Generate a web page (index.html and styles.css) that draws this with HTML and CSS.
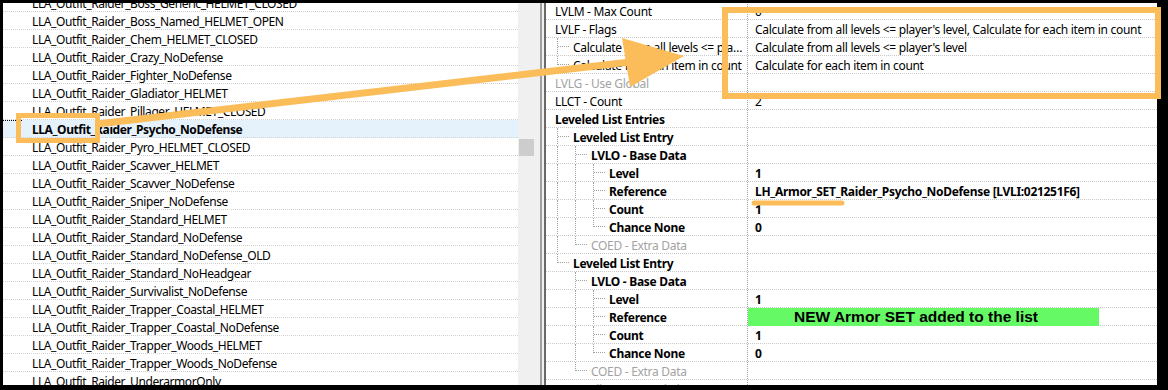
FILE: index.html
```html
<!DOCTYPE html>
<html lang="en">
<head>
    <meta charset="UTF-8">
    <title>Leveled List - Raider Outfits</title>
    <link rel="stylesheet" href="styles.css">
</head>
<body>
    <div class="window">
        <!-- record list (left) -->
        <div class="list-pane">
            <div class="list">
                <div class="item">LLA_Outfit_Raider_Boss_Generic_HELMET_CLOSED</div>
                <div class="item">LLA_Outfit_Raider_Boss_Named_HELMET_OPEN</div>
                <div class="item">LLA_Outfit_Raider_Chem_HELMET_CLOSED</div>
                <div class="item">LLA_Outfit_Raider_Crazy_NoDefense</div>
                <div class="item">LLA_Outfit_Raider_Fighter_NoDefense</div>
                <div class="item">LLA_Outfit_Raider_Gladiator_HELMET</div>
                <div class="item">LLA_Outfit_Raider_Pillager_HELMET_CLOSED</div>
                <div class="item current">LLA_Outfit_Raider_Psycho_NoDefense</div>
                <div class="item">LLA_Outfit_Raider_Pyro_HELMET_CLOSED</div>
                <div class="item">LLA_Outfit_Raider_Scavver_HELMET</div>
                <div class="item">LLA_Outfit_Raider_Scavver_NoDefense</div>
                <div class="item">LLA_Outfit_Raider_Sniper_NoDefense</div>
                <div class="item">LLA_Outfit_Raider_Standard_HELMET</div>
                <div class="item">LLA_Outfit_Raider_Standard_NoDefense</div>
                <div class="item">LLA_Outfit_Raider_Standard_NoDefense_OLD</div>
                <div class="item">LLA_Outfit_Raider_Standard_NoHeadgear</div>
                <div class="item">LLA_Outfit_Raider_Survivalist_NoDefense</div>
                <div class="item">LLA_Outfit_Raider_Trapper_Coastal_HELMET</div>
                <div class="item">LLA_Outfit_Raider_Trapper_Coastal_NoDefense</div>
                <div class="item">LLA_Outfit_Raider_Trapper_Woods_HELMET</div>
                <div class="item">LLA_Outfit_Raider_Trapper_Woods_NoDefense</div>
                <div class="item">LLA_Outfit_Raider_UnderarmorOnly</div>
            </div>
        </div>
        <div class="scrollbar"><div class="thumb"></div></div>
        <div class="splitter"></div>

        <!-- record view (right) -->
        <div class="record-pane">
            <div class="records">
                <div class="rec"><div class="name"><span class="label">LVLM - Max Count</span></div><div class="value">0</div></div>
                <div class="rec"><div class="name"><span class="label">LVLF - Flags</span></div><div class="value">Calculate from all levels &lt;= player's level, Calculate for each item in count</div></div>
                <div class="rec"><div class="name"><span class="g tee"></span><span class="label">Calculate from all levels &lt;= player's level</span></div><div class="value">Calculate from all levels &lt;= player's level</div></div>
                <div class="rec"><div class="name"><span class="g elbow"></span><span class="label">Calculate for each item in count</span></div><div class="value">Calculate for each item in count</div></div>
                <div class="rec unused"><div class="name"><span class="label">LVLG - Use Global</span></div><div class="value"></div></div>
                <div class="rec"><div class="name"><span class="label">LLCT - Count</span></div><div class="value">2</div></div>
                <div class="rec bold"><div class="name"><span class="label">Leveled List Entries</span></div><div class="value"></div></div>

                <div class="rec bold"><div class="name"><span class="g tee"></span><span class="label">Leveled List Entry</span></div><div class="value"></div></div>
                <div class="rec bold"><div class="name"><span class="g pipe"></span><span class="g tee"></span><span class="label">LVLO - Base Data</span></div><div class="value"></div></div>
                <div class="rec bold"><div class="name"><span class="g pipe"></span><span class="g pipe"></span><span class="g tee"></span><span class="label">Level</span></div><div class="value">1</div></div>
                <div class="rec bold"><div class="name"><span class="g pipe"></span><span class="g pipe"></span><span class="g tee"></span><span class="label">Reference</span></div><div class="value">LH_Armor_SET_Raider_Psycho_NoDefense [LVLI:021251F6]</div></div>
                <div class="rec bold"><div class="name"><span class="g pipe"></span><span class="g pipe"></span><span class="g tee"></span><span class="label">Count</span></div><div class="value">1</div></div>
                <div class="rec bold"><div class="name"><span class="g pipe"></span><span class="g pipe"></span><span class="g elbow"></span><span class="label">Chance None</span></div><div class="value">0</div></div>
                <div class="rec unused"><div class="name"><span class="g pipe"></span><span class="g elbow"></span><span class="label">COED - Extra Data</span></div><div class="value"></div></div>

                <div class="rec bold"><div class="name"><span class="g elbow"></span><span class="label">Leveled List Entry</span></div><div class="value"></div></div>
                <div class="rec bold"><div class="name"><span class="g"></span><span class="g tee"></span><span class="label">LVLO - Base Data</span></div><div class="value"></div></div>
                <div class="rec bold"><div class="name"><span class="g"></span><span class="g pipe"></span><span class="g tee"></span><span class="label">Level</span></div><div class="value">1</div></div>
                <div class="rec bold"><div class="name"><span class="g"></span><span class="g pipe"></span><span class="g tee"></span><span class="label">Reference</span></div><div class="value"><span class="note">NEW Armor SET added to the list</span></div></div>
                <div class="rec bold"><div class="name"><span class="g"></span><span class="g pipe"></span><span class="g tee"></span><span class="label">Count</span></div><div class="value">1</div></div>
                <div class="rec bold"><div class="name"><span class="g"></span><span class="g pipe"></span><span class="g elbow"></span><span class="label">Chance None</span></div><div class="value">0</div></div>
                <div class="rec unused"><div class="name"><span class="g"></span><span class="g elbow"></span><span class="label">COED - Extra Data</span></div><div class="value"></div></div>

                <div class="rec unused"><div class="name"><span class="label">LLKC - Filter Keyword Chances</span></div><div class="value"></div></div>
            </div>
        </div>
    </div>

    <!-- annotations drawn over the screenshot -->
    <svg class="marks" width="1168" height="390" viewBox="0 0 1168 390">
        <rect x="18.5" y="115.5" width="79" height="25" fill="none" stroke="#fbbd59" stroke-width="5"/>
        <rect x="725" y="10" width="433" height="86" fill="none" stroke="#fbbd59" stroke-width="6"/>
        <line x1="97" y1="124" x2="630" y2="62" stroke="#fbbd59" stroke-width="7"/>
        <polygon points="622,38 630,87 684,56" fill="#fbbd59"/>
        <line x1="754" y1="203" x2="842" y2="203" stroke="#fbbd59" stroke-width="5" stroke-linecap="round"/>
    </svg>
</body>
</html>
```

FILE: styles.css
```css
body {
    margin: 0;
    height: 390px;
    overflow: hidden;
    background: #000; /* black frame round the capture */
    font-family: "Noto Sans", "Open Sans", sans-serif;
    font-size: 12px;
    letter-spacing: -0.4px;
    color: #000;
    position: relative;
}

.window {
    display: flex;
    height: 382px;
    margin: 3px 11px 0 3px;
    background: #fff;
    overflow: hidden;
}

/* left list */
.list-pane {
    width: 515px;
    flex: none;
    overflow: hidden;
}

.list {
    margin-top: -9px; /* scrolled a bit */
}

.item {
    height: 17px;
    line-height: 19px;
    padding-left: 29px;
    border-bottom: 1px dotted #d2d2d2;
    white-space: nowrap;
    overflow: hidden;
}

.item.current {
    font-weight: bold;
    background-color: #e5f1fb;
    background-image: repeating-linear-gradient(90deg, #000 0 1px, transparent 1px 2px);
    background-size: 20px 1px;
    background-repeat: no-repeat;
}

.scrollbar {
    width: 18px;
    flex: none;
    background: #f0f0f0;
}

.thumb {
    height: 17px;
    margin: 136px 2px 0 1px;
    background: #cdcdcd;
}

.splitter {
    width: 10px;
    flex: none;
    background: linear-gradient(90deg, #f0f0f0 0 4px, #a0a0a0 4px 6px, #f0f0f0 6px 8px, #696969 8px 10px);
}

/* right record view */
.record-pane {
    flex: 1;
    min-width: 0;
    overflow: hidden;
    letter-spacing: -0.3px;
}

.records {
    margin-top: -1px;
}

.rec {
    display: flex;
    height: 17px;
    line-height: 19px;
    border-bottom: 1px dotted #c8c8c8;
    white-space: nowrap;
}

.name {
    width: 192px;
    flex: none;
    display: flex;
    padding-left: 9px;
    overflow: hidden;
}

.label {
    flex: 1;
    min-width: 0;
    overflow: hidden;
    text-overflow: ellipsis;
}

.value {
    flex: 1;
    border-left: 1px dotted #a0a0a0;
    padding-left: 7px;
}

.rec.bold .label,
.rec.bold .value {
    font-weight: bold;
}

.rec.unused .label {
    color: #a3a3a3;
}

/* tree guide lines */
.g {
    width: 18px;
    flex: none;
    position: relative;
}

.g.pipe::before,
.g.tee::before,
.g.elbow::before {
    content: "";
    position: absolute;
    left: 2px;
    top: 0;
    bottom: -1px;
    border-left: 1px dotted #a0a0a0;
}

.g.elbow::before {
    bottom: auto;
    height: 9px;
}

.g.tee::after,
.g.elbow::after {
    content: "";
    position: absolute;
    left: 3px;
    top: 8px;
    width: 11px;
    border-top: 1px dotted #a0a0a0;
}

.note {
    display: block;
    width: 305px;
    height: 18px;
    margin-left: -7px;
    padding-left: 46px;
    background: #66f966;
    font-family: "Liberation Sans", Arial, sans-serif;
    font-size: 15.5px;
    letter-spacing: 0;
    line-height: 18px;
}

.marks {
    position: absolute;
    left: 0;
    top: 0;
}
```
